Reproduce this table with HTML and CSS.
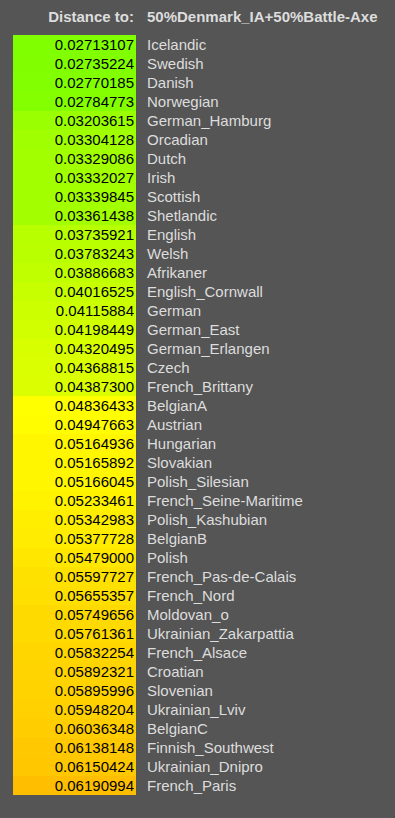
FILE: index.html
```html
<!DOCTYPE html>
<html>
<head>
<meta charset="utf-8">
<link rel="stylesheet" href="styles.css">
</head>
<body>
<div class="page">
  <div class="head">
    <div class="head-label">Distance to:</div>
    <div class="head-target">50%Denmark_IA+50%Battle-Axe</div>
  </div>
  <div class="list">
    <div class="row"><div class="dist" style="background:hsl(90,100%,50%)">0.02713107</div><div class="name">Icelandic</div></div>
    <div class="row"><div class="dist" style="background:hsl(89.7,100%,50%)">0.02735224</div><div class="name">Swedish</div></div>
    <div class="row"><div class="dist" style="background:hsl(89.3,100%,50%)">0.02770185</div><div class="name">Danish</div></div>
    <div class="row"><div class="dist" style="background:hsl(89.1,100%,50%)">0.02784773</div><div class="name">Norwegian</div></div>
    <div class="row"><div class="dist" style="background:hsl(83.7,100%,50%)">0.03203615</div><div class="name">German_Hamburg</div></div>
    <div class="row"><div class="dist" style="background:hsl(82.4,100%,50%)">0.03304128</div><div class="name">Orcadian</div></div>
    <div class="row"><div class="dist" style="background:hsl(82.0,100%,50%)">0.03329086</div><div class="name">Dutch</div></div>
    <div class="row"><div class="dist" style="background:hsl(82.0,100%,50%)">0.03332027</div><div class="name">Irish</div></div>
    <div class="row"><div class="dist" style="background:hsl(81.9,100%,50%)">0.03339845</div><div class="name">Scottish</div></div>
    <div class="row"><div class="dist" style="background:hsl(81.6,100%,50%)">0.03361438</div><div class="name">Shetlandic</div></div>
    <div class="row"><div class="dist" style="background:hsl(76.8,100%,50%)">0.03735921</div><div class="name">English</div></div>
    <div class="row"><div class="dist" style="background:hsl(76.2,100%,50%)">0.03783243</div><div class="name">Welsh</div></div>
    <div class="row"><div class="dist" style="background:hsl(74.8,100%,50%)">0.03886683</div><div class="name">Afrikaner</div></div>
    <div class="row"><div class="dist" style="background:hsl(73.1,100%,50%)">0.04016525</div><div class="name">English_Cornwall</div></div>
    <div class="row"><div class="dist" style="background:hsl(71.9,100%,50%)">0.04115884</div><div class="name">German</div></div>
    <div class="row"><div class="dist" style="background:hsl(70.8,100%,50%)">0.04198449</div><div class="name">German_East</div></div>
    <div class="row"><div class="dist" style="background:hsl(69.2,100%,50%)">0.04320495</div><div class="name">German_Erlangen</div></div>
    <div class="row"><div class="dist" style="background:hsl(68.6,100%,50%)">0.04368815</div><div class="name">Czech</div></div>
    <div class="row"><div class="dist" style="background:hsl(68.4,100%,50%)">0.04387300</div><div class="name">French_Brittany</div></div>
    <div class="row"><div class="dist" style="background:hsl(60,100%,50%)">0.04836433</div><div class="name">BelgianA</div></div>
    <div class="row"><div class="dist" style="background:hsl(59.5,100%,50%)">0.04947663</div><div class="name">Austrian</div></div>
    <div class="row"><div class="dist" style="background:hsl(57.8,100%,50%)">0.05164936</div><div class="name">Hungarian</div></div>
    <div class="row"><div class="dist" style="background:hsl(57.8,100%,50%)">0.05165892</div><div class="name">Slovakian</div></div>
    <div class="row"><div class="dist" style="background:hsl(57.8,100%,50%)">0.05166045</div><div class="name">Polish_Silesian</div></div>
    <div class="row"><div class="dist" style="background:hsl(57.1,100%,50%)">0.05233461</div><div class="name">French_Seine-Maritime</div></div>
    <div class="row"><div class="dist" style="background:hsl(55.9,100%,50%)">0.05342983</div><div class="name">Polish_Kashubian</div></div>
    <div class="row"><div class="dist" style="background:hsl(55.5,100%,50%)">0.05377728</div><div class="name">BelgianB</div></div>
    <div class="row"><div class="dist" style="background:hsl(54.3,100%,50%)">0.05479000</div><div class="name">Polish</div></div>
    <div class="row"><div class="dist" style="background:hsl(53.0,100%,50%)">0.05597727</div><div class="name">French_Pas-de-Calais</div></div>
    <div class="row"><div class="dist" style="background:hsl(52.4,100%,50%)">0.05655357</div><div class="name">French_Nord</div></div>
    <div class="row"><div class="dist" style="background:hsl(51.3,100%,50%)">0.05749656</div><div class="name">Moldovan_o</div></div>
    <div class="row"><div class="dist" style="background:hsl(51.2,100%,50%)">0.05761361</div><div class="name">Ukrainian_Zakarpattia</div></div>
    <div class="row"><div class="dist" style="background:hsl(50.4,100%,50%)">0.05832254</div><div class="name">French_Alsace</div></div>
    <div class="row"><div class="dist" style="background:hsl(49.8,100%,50%)">0.05892321</div><div class="name">Croatian</div></div>
    <div class="row"><div class="dist" style="background:hsl(49.7,100%,50%)">0.05895996</div><div class="name">Slovenian</div></div>
    <div class="row"><div class="dist" style="background:hsl(49.1,100%,50%)">0.05948204</div><div class="name">Ukrainian_Lviv</div></div>
    <div class="row"><div class="dist" style="background:hsl(48.2,100%,50%)">0.06036348</div><div class="name">BelgianC</div></div>
    <div class="row"><div class="dist" style="background:hsl(47.0,100%,50%)">0.06138148</div><div class="name">Finnish_Southwest</div></div>
    <div class="row"><div class="dist" style="background:hsl(46.9,100%,50%)">0.06150424</div><div class="name">Ukrainian_Dnipro</div></div>
    <div class="row"><div class="dist" style="background:hsl(45,100%,50%)">0.06190994</div><div class="name">French_Paris</div></div>
  </div>
</div>
</body>
</html>
```
FILE: styles.css
```css
html, body {
  margin: 0;
  padding: 0;
  background: #555555;
}
body {
  font-family: "Liberation Sans", Arial, sans-serif;
  font-size: 15px;
  line-height: 19px;
  color: #dddddd;
}
.page {
  padding: 7px 0 0 13px;
}
.head {
  display: grid;
  grid-template-columns: 123px 1fr;
  font-weight: bold;
  margin-bottom: 9px;
}
.head-label {
  text-align: right;
  padding-right: 2px;
}
.head-target {
  padding-left: 11px;
  white-space: nowrap;
}
.list {
  display: flex;
  flex-direction: column;
}
.row {
  display: grid;
  grid-template-columns: 123px 1fr;
  height: 19px;
}
.dist {
  color: #000;
  text-align: right;
  padding-right: 2px;
}
.name {
  padding-left: 11px;
  white-space: nowrap;
}
```
